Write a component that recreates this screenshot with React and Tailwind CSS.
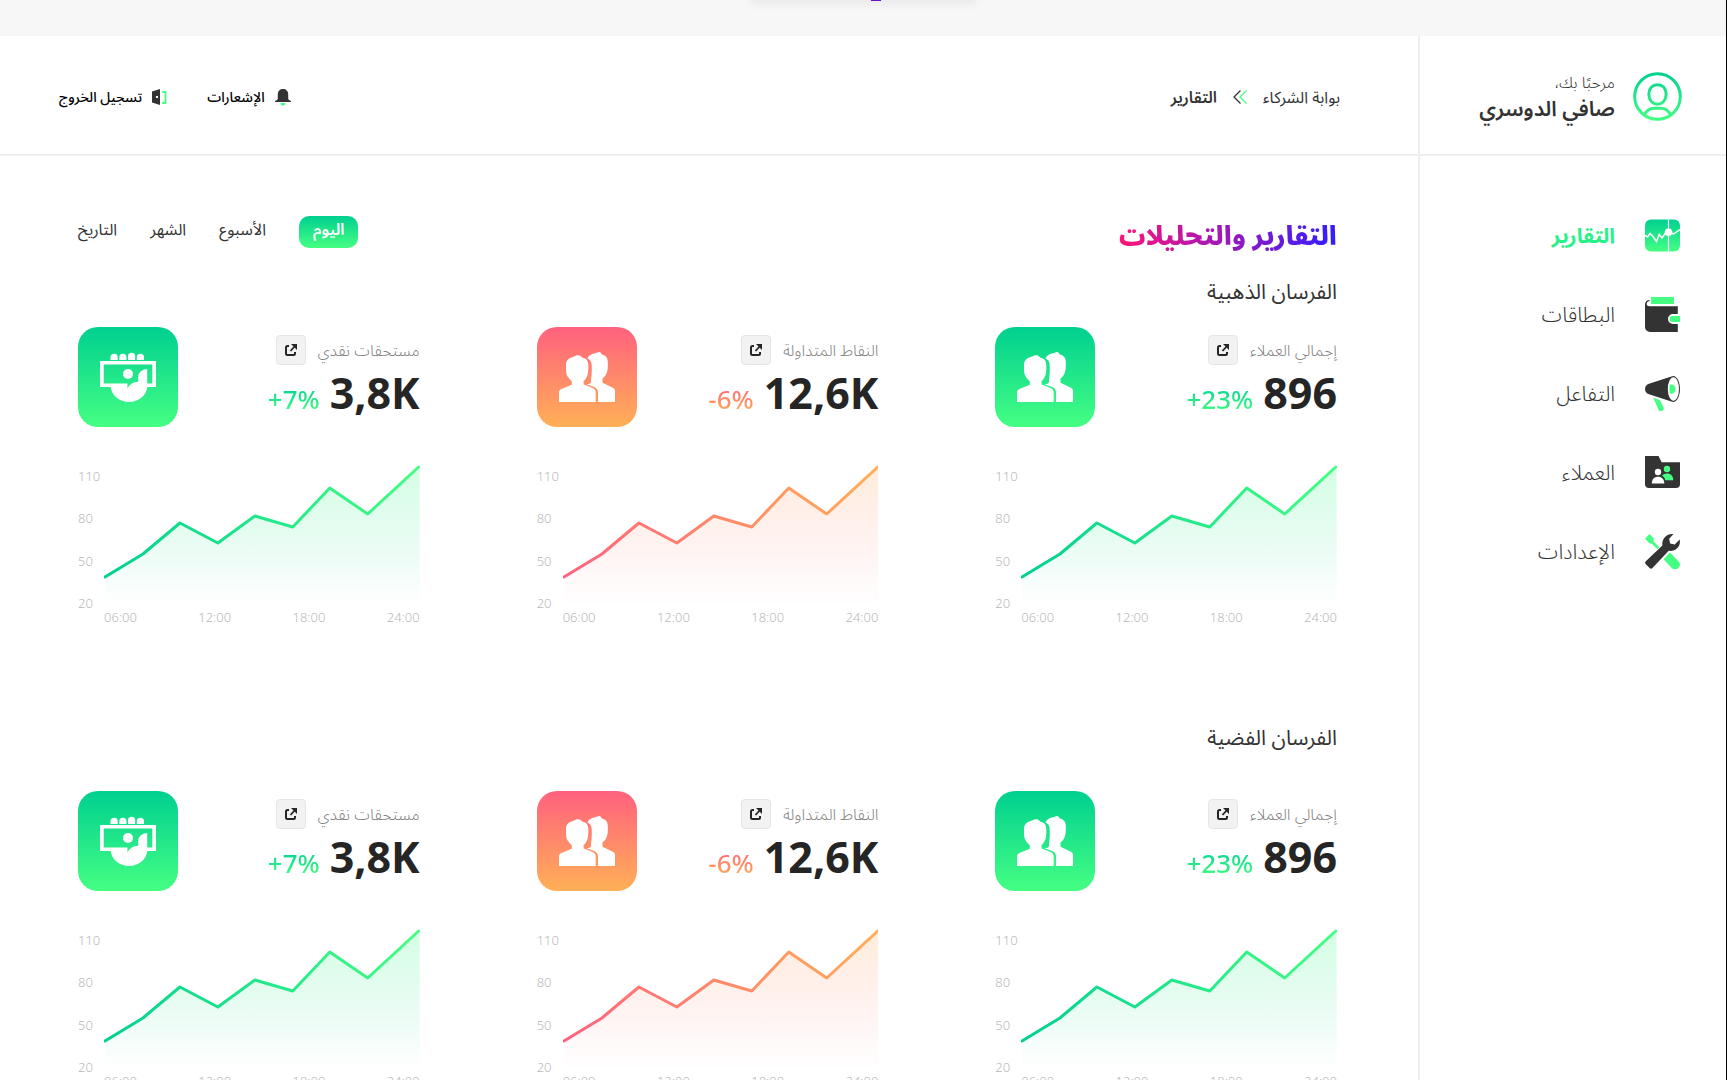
import React from "react";

const GREEN = ["#00d090", "#45ff83"];
const CORAL = ["#ff617e", "#ffb057"];

const stats = [
  { label: "إجمالي العملاء", value: "896", change: "+23%", tone: "green", icon: "people" },
  { label: "النقاط المتداولة", value: "12,6K", change: "-6%", tone: "coral", icon: "people" },
  { label: "مستحقات نقدي", value: "3,8K", change: "+7%", tone: "green", icon: "cash" },
];

const sections = [
  { id: "gold", title: "الفرسان الذهبية", spacing: "mt-[17px] gap-5" },
  { id: "silver", title: "الفرسان الفضية", spacing: "mt-24 gap-[38px]" },
];

const navItems = [
  { label: "التقارير", Icon: ReportsIcon, active: true },
  { label: "البطاقات", Icon: WalletIcon },
  { label: "التفاعل", Icon: MegaphoneIcon },
  { label: "العملاء", Icon: FolderIcon },
  { label: "الإعدادات", Icon: ToolsIcon },
];

const ranges = ["اليوم", "الأسبوع", "الشهر", "التاريخ"];

function AvatarIcon() {
  return (
    <svg viewBox="0 0 49 49" className="size-[49px] shrink-0" fill="none" stroke="url(#avatar)" strokeWidth="3">
      <defs>
        <linearGradient id="avatar" gradientUnits="userSpaceOnUse" x1="24" y1="0" x2="24" y2="49">
          <stop stopColor={GREEN[0]} />
          <stop offset="1" stopColor={GREEN[1]} />
        </linearGradient>
      </defs>
      <circle cx="24.5" cy="24.5" r="22.8" />
      <path d="M24.5 12.800c-5.200 0-8.600 3.600-8.600 8.400v1.600c0 5 3.600 9.400 8.600 9.400s8.600-4.400 8.600-9.400v-1.600c0-4.800-3.400-8.400-8.600-8.400Z" />
      <path d="M11.500 42.500c2.200-3.900 5.500-6.300 9.500-6.300h7c4 0 7.300 2.400 9.500 6.300" />
    </svg>
  );
}

function ReportsIcon() {
  return (
    <svg viewBox="0 0 35 35" className="size-[35px]">
      <defs>
        <linearGradient id="reports" x1="0" y1="0" x2="0" y2="1">
          <stop stopColor={GREEN[0]} />
          <stop offset="1" stopColor={GREEN[1]} />
        </linearGradient>
      </defs>
      <rect y="1.500" width="35" height="32" rx="6" fill="url(#reports)" />
      <path d="M23.500 1.500v32" stroke="#fff" strokeWidth="1.200" />
      <path
        d="m0 17.500 2.500 1.500 2.500-3.500 3 3 3.500 5 2.800-7 2.700 3.500 3.500-5h5.500l2.500 1 6.500-4.500"
        fill="none"
        stroke="#fff"
        strokeWidth="1.500"
      />
      <circle cx="23.500" cy="14.200" r="3.800" fill="#fff" />
    </svg>
  );
}

function WalletIcon() {
  return (
    <svg viewBox="0 0 35 35" className="size-[35px]">
      <path d="M6 0h23v7H6Z" fill="#45ff83" />
      <path
        d="M4.500 3C2 3 0 4.800 0 7.500V30a5 5 0 0 0 5 5h27.800v-8H28a5 5 0 0 1 0-10h4.800V9.200H4.800C2.500 9.200 1.200 8 1.800 6.200 2.200 4.800 3.200 4.300 4.500 4.300Z"
        fill="#333"
      />
      <path d="M35 19h-7.500a3 3 0 0 0 0 6H35Z" fill="#45ff83" />
    </svg>
  );
}

function MegaphoneIcon() {
  return (
    <svg viewBox="0 0 35 35" className="size-[35px]">
      <path
        d="M28.200 0C31.900 0 35 5.800 35 13s-3.100 13-6.800 13c-.6 0-1.200-.2-1.800-.5L4 18.200C1.500 17.400 0 15.500 0 13s1.500-4.400 4-5.200L26.400.5C27 .2 27.600 0 28.200 0Z"
        fill="#333"
      />
      <ellipse cx="28.400" cy="13" rx="5.600" ry="11.800" fill="#fff" />
      <path d="M24.800 8.500h2.200c2 0 3.500 2.200 3.500 4.500s-1.500 4.700-3.500 4.700h-2.200c-.5-2.900-.5-6.200 0-9.200Z" fill="#45ff83" />
      <path d="m8.300 21.800 6.500 2.100 3.800 7.600a2.800 2.800 0 0 1-5 2.400Z" fill="#45ff83" />
    </svg>
  );
}

function FolderIcon() {
  return (
    <svg viewBox="0 0 35 35" className="size-[35px]">
      <path d="M0 1h13.500l3.200 6.200H35V29a4 4 0 0 1-4 4H4a4 4 0 0 1-4-4Z" fill="#333" />
      <circle cx="22" cy="14" r="3.200" fill="#45ff83" />
      <path d="M17 20.500c1.300-1.300 3-2 5-2 3.800 0 6.300 2.600 6.300 6.800h-8c-.3-2-1.500-3.700-3.300-4.800Z" fill="#45ff83" />
      <circle cx="13" cy="17" r="3.200" fill="#fff" />
      <path d="M6.800 28.500c0-4.200 2.500-6.800 6.200-6.800s6.300 2.600 6.300 6.800Z" fill="#fff" />
    </svg>
  );
}

function ToolsIcon() {
  return (
    <svg viewBox="0 0 35 35" className="size-[35px]">
      <path d="m0 4.500 4.500-4.500 4 4 .3 3.700 5.600 5.600-2 2-5.600-5.600L4 9Z" fill="#45ff83" />
      <path d="m25 18.500 8.700 9a4.800 4.800 0 0 1-6.700 6.800l-8.500-9Z" fill="#45ff83" />
      <path
        d="M17.400 11.600C16.500 5 21.500-.8 28.500.1L24.200 4.800l.9 4.700 4.600 1 5-4.900c1.400 6.800-4.300 12.300-11 11.200L7.500 34c-.9.900-2 .9-2.900 0L.8 30.200c-.9-.9-.9-2 0-2.900Z"
        fill="#333"
      />
    </svg>
  );
}

function BellIcon() {
  return (
    <svg viewBox="0 0 16 17" className="h-[17px] w-4 shrink-0">
      <path d="M8 0C5 0 2.800 2.100 2.800 5v4.300c0 .9-.4 1.500-1.100 1.900-.9.400-1.700.5-1.700 1.300V13h16v-.5c0-.8-.8-.9-1.700-1.300-.7-.4-1.100-1-1.100-1.900V5c0-2.900-2.200-5-5.200-5Z" fill="#333" />
      <path d="M5.500 14h5c0 1.600-1.100 2.700-2.500 2.700S5.500 15.600 5.500 14Z" fill="#45ff83" />
    </svg>
  );
}

function LogoutIcon() {
  return (
    <svg viewBox="0 0 15 16" className="h-4 w-[15px] shrink-0">
      <path d="M0 2.500 8 0v16l-8-2.500Z" fill="#333" />
      <rect x="4" y="7" width="2" height="2" fill="#fff" />
      <path d="M10.200 3h3.300v11h-3.300" fill="none" stroke="#45ff83" strokeWidth="1.800" />
    </svg>
  );
}

function CrumbArrow() {
  return (
    <svg viewBox="0 0 14 14" className="size-[14px] shrink-0" fill="none" strokeWidth="1.300">
      <path d="M7.500.5 1 7l6.500 6.500" stroke="#333" />
      <path d="M13.500.5 7 7l6.500 6.500" stroke="#45ff83" />
    </svg>
  );
}

function PeopleIcon() {
  return (
    <svg viewBox="0 0 56 50" className="h-[50px] w-14" fill="#fff">
      <path d="M7 13C7 8.500 9.500 6.400 13 5.200l4.500-1.600c1.700-.5 3.500-.3 4.700.8l1.300 1.300C27 6 29 8.500 29.300 12.500c.3 7.500-.3 12.700-4.800 16.700l.2 3.300L33 35.800c2.500 1 3.600 2.200 3.700 5V50H0v-9.200c0-2 .5-2.800 2.500-3.700L12.800 32.800v-3.600C9 25.800 7 23 7 18.500Z" />
      <path d="M28.500 6.500c.8-2.500 3-4 5.500-4.800L40.200 0c1 0 2.200 1 2.600 2.500 4.200.9 5.900 3.500 6 7.500.2 6.800 0 12.500-5.300 16.500v4.300l9.300 4.400c2.200 1 3.200 1.800 3.200 4V50H39v-9.500c0-3-1.500-4.600-4.300-5.700l-7.200-2.500c2.500-.1 4.500-.9 4.500-2v-2.800c.9-5.300 1-11.500.5-16-.4-2.300-1.700-4-4-5Z" />
    </svg>
  );
}

function CashIcon() {
  return (
    <svg viewBox="0 0 56 50" className="h-[50px] w-14" fill="#fff">
      <path d="M10.500 8V5.300a3.600 3.600 0 0 1 7.200 0V8ZM19.300 8V5.300a3.600 3.600 0 0 1 7.200 0V8ZM28 8V3.700a3.700 3.700 0 0 1 7.200 0V8ZM36.800 8V5.300a3.600 3.600 0 0 1 7.200 0V8Z" />
      <path d="M0 9h56v26h-8.600C46.300 43.500 38.500 50 29 50S11.700 43.500 10.600 35H0Zm3.700 3.500v19H27.500V37c1.200-4.300 5.500-7.100 10.700-7.300V25c0-4.300 3.800-7.500 9-8v14.500h5.100v-19Z" />
      <circle cx="28" cy="22" r="5" />
    </svg>
  );
}

function ExternalIcon() {
  return (
    <svg viewBox="0 0 12 12" className="size-3" fill="none" stroke="#252525" strokeWidth="2">
      <path d="M4 2H2.500A1.500 1.500 0 0 0 1 3.500v6A1.500 1.500 0 0 0 2.500 11h6A1.500 1.500 0 0 0 10 9.500V8" />
      <path d="M5.500 7 10 2" strokeWidth="1.800" />
      <path d="M6 0h6v6Z" fill="#252525" stroke="none" />
    </svg>
  );
}

function Chart({ id, tone }) {
  const [from, to] = tone === "green" ? GREEN : CORAL;
  const line = "1,112 39,89 76,58 114,78 151,51 189,62 226,23 264,49 315,2";
  return (
    <div dir="ltr" className="mt-[38px] flex text-[13px] leading-4 font-light text-[#b8b8b8]">
      <div className="flex h-[146px] w-[26px] shrink-0 flex-col justify-between pt-[3px]">
        <span>110</span>
        <span>80</span>
        <span>50</span>
        <span>20</span>
      </div>
      <div className="min-w-0 flex-1">
        <svg viewBox="0 0 316 140" preserveAspectRatio="none" className="block h-[140px] w-full">
          <defs>
            <linearGradient id={`${id}-line`} gradientUnits="userSpaceOnUse" x1="1" y1="112" x2="315" y2="2">
              <stop stopColor={from} />
              <stop offset="1" stopColor={to} />
            </linearGradient>
            <linearGradient id={`${id}-area`} x1="0" y1="1" x2="0" y2="0">
              <stop stopColor={from} stopOpacity="0" />
              <stop offset="1" stopColor={to} stopOpacity="0.22" />
            </linearGradient>
          </defs>
          <polygon points={`${line} 316,2 316,140 1,140`} fill={`url(#${id}-area)`} />
          <polyline
            points={line}
            fill="none"
            stroke={`url(#${id}-line)`}
            strokeWidth="3"
            strokeLinecap="round"
            strokeLinejoin="round"
          />
        </svg>
        <div className="mt-1 flex justify-between">
          <span>06:00</span>
          <span>12:00</span>
          <span>18:00</span>
          <span>24:00</span>
        </div>
      </div>
    </div>
  );
}

function StatCard({ id, label, value, change, tone, icon }) {
  const tile =
    tone === "green"
      ? "bg-linear-to-b/srgb from-[#00d090] to-[#45ff83]"
      : "bg-linear-to-b/srgb from-[#ff617e] to-[#ffb057]";
  return (
    <article>
      <div className="flex justify-between">
        <div className="pt-2">
          <div className="flex items-center gap-3">
            <h3 className="text-base leading-6 font-light text-[#808080]">{label}</h3>
            <button
              type="button"
              aria-label={`فتح ${label}`}
              className="flex size-[30px] items-center justify-center rounded border border-[#e6e6e6] bg-[#f2f2f2]"
            >
              <ExternalIcon />
            </button>
          </div>
          <div className="flex items-baseline gap-2.5 leading-14">
            <span dir="ltr" className="text-[43px] font-bold text-[#252525]">
              {value}
            </span>
            <span dir="ltr" className={`bg-clip-text text-[26px] leading-7 font-medium text-transparent ${tile}`}>
              {change}
            </span>
          </div>
        </div>
        <div className={`flex size-[100px] items-center justify-center rounded-[20px] ${tile}`}>
          {icon === "people" ? <PeopleIcon /> : <CashIcon />}
        </div>
      </div>
      <Chart id={id} tone={tone} />
    </article>
  );
}

export default function App() {
  return (
    <div
      dir="rtl"
      lang="ar"
      className="flex h-screen flex-col overflow-hidden border-r border-black bg-white font-['Noto_Sans','Noto_Sans_Arabic','DejaVu_Sans',sans-serif] text-[#333]"
    >
      <div className="flex h-9 shrink-0 justify-center bg-[#f7f7f7]">
        <div className="relative h-0 w-[224px] shadow-[0_0_10px_1px_rgba(0,0,0,0.25)]">
          <span className="absolute top-0 right-[94px] h-px w-2.5 bg-[#6a11cb]" />
        </div>
      </div>

      <div className="flex min-h-0 flex-1">
        <aside className="w-[308px] shrink-0 border-l-2 border-[#eee]">
          <div className="flex h-30 items-center gap-[18px] border-b-2 border-[#eee] pt-0.5 pr-[44px]">
            <AvatarIcon />
            <div>
              <p className="text-base leading-6 font-light">مرحبًا بك،</p>
              <p className="text-[21px] leading-7 font-semibold">صافي الدوسري</p>
            </div>
          </div>
          <nav className="flex flex-col gap-11 pt-[62px] pr-[46px]">
            {navItems.map(({ label, Icon, active }) => (
              <a
                key={label}
                href="#"
                className={`flex items-center gap-[30px] text-[21px] leading-[35px] ${
                  active ? "font-bold text-[#2af08a]" : "font-light text-[#333]"
                }`}
              >
                <Icon />
                {label}
              </a>
            ))}
          </nav>
        </aside>

        <div className="min-w-0 flex-1">
          <header className="flex h-30 items-center justify-between border-b-2 border-[#eee] pt-1 pr-[78px] pl-[59px]">
            <div className="flex items-center gap-4 text-base leading-6">
              <a href="#">بوابة الشركاء</a>
              <CrumbArrow />
              <span className="font-semibold">التقارير</span>
            </div>
            <div className="flex items-center gap-10 text-sm leading-6 font-medium text-black">
              <button type="button" className="flex items-center gap-2.5">
                <BellIcon />
                الإشعارات
              </button>
              <button type="button" className="flex items-center gap-2.5">
                <LogoutIcon />
                تسجيل الخروج
              </button>
            </div>
          </header>

          <main className="pt-[56px] pr-[81px] pl-[78px]">
            <div className="flex items-start justify-between">
              <h1 className="bg-linear-to-l/srgb from-[#321eff] to-[#ff1478] bg-clip-text text-[26px] leading-[46px] font-black text-transparent">
                التقارير والتحليلات
              </h1>
              <div className="flex items-center gap-[33px] pt-1 text-base leading-6">
                {ranges.map((range, i) => (
                  <button
                    key={range}
                    type="button"
                    className={
                      i === 0
                        ? "rounded-[10px] bg-linear-to-b/srgb from-[#00d090] to-[#45ff83] px-3.5 pt-px pb-[7px] font-semibold text-white"
                        : "pt-px pb-[7px]"
                    }
                  >
                    {range}
                  </button>
                ))}
              </div>
            </div>

            {sections.map(({ id, title, spacing }) => (
              <section key={id} className={`flex flex-col ${spacing}`}>
                <h2 className="text-[21px] leading-8">{title}</h2>
                <div className="grid grid-cols-3 gap-[117px]">
                  {stats.map((stat, i) => (
                    <StatCard key={stat.label} id={`${id}-${i}`} {...stat} />
                  ))}
                </div>
              </section>
            ))}
          </main>
        </div>
      </div>
    </div>
  );
}
